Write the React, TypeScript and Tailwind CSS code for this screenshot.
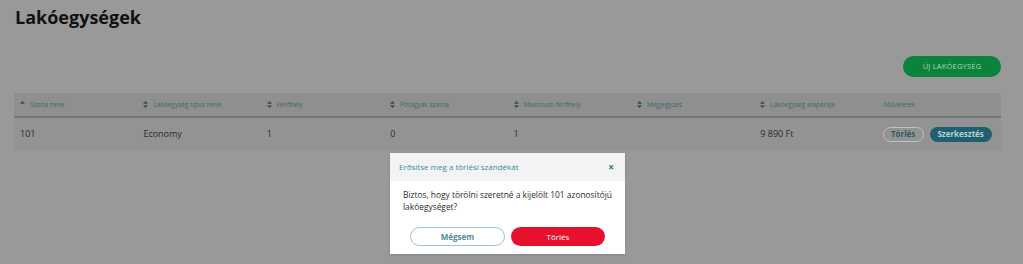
import React from "react";

const cols = [
  { label: "Szoba neve", icon: "up" },
  { label: "Lakóegység típus neve", icon: "both" },
  { label: "Férőhely", icon: "both" },
  { label: "Pótágyak száma", icon: "both" },
  { label: "Maximum férőhely", icon: "both" },
  { label: "Megjegyzés", icon: "both" },
  { label: "Lakóegység alapárája", icon: "both" },
  { label: "Műveletek", icon: "none" },
];

function SortIcon({ kind }: { kind: string }) {
  if (kind === "none") return null;
  return (
    <svg width="5" height="7" viewBox="0 0 5 7" className="mr-[5px] shrink-0">
      <path d="M2.5 0 L5 2.8 L0 2.8 Z" fill="#2f4f55" />
      {kind === "both" && <path d="M2.5 7 L5 4.2 L0 4.2 Z" fill="#2f4f55" />}
    </svg>
  );
}

export default function App() {
  const row = ["101", "Economy", "1", "0", "1", "", "9 890 Ft"];
  return (
    <div
      className="relative w-[1023px] h-[264px] overflow-hidden bg-[#999999]"
      style={{ fontFamily: "'Open Sans', 'Noto Sans', sans-serif" }}
    >
      <div className="pl-[14px] pr-[22px] pt-[4px]">
        <h1 className="text-[18px] font-bold text-[#111] leading-[26px] pl-[1px]">Lakóegységek</h1>
        <div className="flex justify-end mt-[26px]">
          <div className="w-[98px] h-[21px] rounded-full bg-[#0b833a] flex items-center justify-center text-[7.5px] text-[#a9d8b9] tracking-[0.2px]">
            ÚJ LAKÓEGYSÉG
          </div>
        </div>
        <div className="mt-[16px]">
          <div className="grid grid-cols-8 h-[25px] bg-[#8f8f8f] border-b-[2px] border-[#6e7676]">
            {cols.map((c) => (
              <div key={c.label} className="flex items-center pl-[6px] text-[6.5px] text-[#3f666c]">
                <SortIcon kind={c.icon} />
                <span>{c.label}</span>
              </div>
            ))}
          </div>
          <div className="grid grid-cols-8 h-[32px] bg-[#939393]">
            {row.map((v, i) => (
              <div key={i} className="flex items-center pl-[6px] text-[9px] text-[#2a2a2a]">
                {v}
              </div>
            ))}
            <div className="flex items-center pl-[5px] gap-[6px]">
              <div className="h-[15px] w-[41px] rounded-full border border-[#c2c2c2] flex items-center justify-center text-[8px] font-bold text-[#2e5b63]">
                Törlés
              </div>
              <div className="h-[15px] w-[62px] rounded-full bg-[#1e6070] flex items-center justify-center text-[8px] font-bold text-[#b9cfd3]">
                Szerkesztés
              </div>
            </div>
          </div>
        </div>
      </div>

      <div className="absolute left-[390px] top-[153px] w-[235px] h-[101px] bg-white shadow-sm flex flex-col">
        <div className="h-[28px] bg-[#f2f4f4] flex items-center justify-between pl-[9px] pr-[11px]">
          <span className="text-[8px] text-[#3c8b9c]">Erősítse meg a törlési szándékát</span>
          <span className="text-[10px] font-bold text-[#2b6f80] leading-none">×</span>
        </div>
        <div className="px-[13px] pt-[8px] text-[8.4px] leading-[12px] text-[#2b2b2b]">
          Biztos, hogy törölni szeretné a kijelölt 101 azonosítójú lakóegységet?
        </div>
        <div className="flex justify-center gap-[6px] mt-[14px]">
          <div className="w-[95px] h-[19px] rounded-full border border-[#9cc6cf] flex items-center justify-center text-[8px] font-bold text-[#4c8c9c]">
            Mégsem
          </div>
          <div className="w-[94px] h-[19px] rounded-full bg-[#e8112d] flex items-center justify-center text-[8px] text-white">
            Törlés
          </div>
        </div>
      </div>
    </div>
  );
}
